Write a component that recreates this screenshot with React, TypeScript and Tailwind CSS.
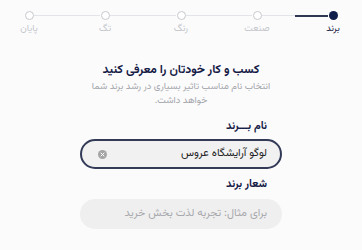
import { useState } from "react";

const steps = ["برند", "صنعت", "رنگ", "تگ", "پایان"];

function Stepper() {
  return (
    <div dir="rtl" className="flex items-start pt-[11px] pr-[29px] pl-[29px] justify-between">
      {steps.map((s, i) => (
        <div key={s} className="contents">
          <div className="flex w-0 flex-col items-center">
            {i === 0 ? (
              <span className="block h-[9px] w-[9px] shrink-0 rounded-full bg-[#0f1d4a]" />
            ) : (
              <span className="block h-[9px] w-[9px] shrink-0 rounded-full border border-[#c7c9ce] bg-white" />
            )}
            <span
              className={`mt-[3px] whitespace-nowrap text-[9.5px] leading-[12px] ${
                i === 0 ? "text-[#1c2340]" : "text-[#c4c6cb]"
              }`}
            >
              {s}
            </span>
          </div>
          {i < steps.length - 1 && (
            <div className="mt-[4px] flex h-px flex-1 items-center px-[5px]">
              {i === 0 ? (
                <>
                  <div className="h-[2px] flex-1 bg-[#2f3855]" />
                  <div className="h-px flex-1 bg-[#e3e4e8]" />
                </>
              ) : (
                <div className="h-px flex-1 bg-[#e3e4e8]" />
              )}
            </div>
          )}
        </div>
      ))}
    </div>
  );
}

export default function App() {
  const [name, setName] = useState("لوگو آرایشگاه عروس");
  const [slogan, setSlogan] = useState("");

  return (
    <div
      dir="rtl"
      className="h-[250px] w-[362px] overflow-hidden bg-[#fbfbfc]"
      style={{ fontFamily: '"Vazirmatn", "Noto Sans Arabic", "DejaVu Sans", sans-serif' }}
    >
      <Stepper />

      <div className="mx-auto mt-[26px] w-[202px]">
        <h1 className="text-center text-[12px] font-bold leading-[19px] text-[#151a45]">
          کسب و کار خودتان را معرفی کنید
        </h1>
        <p className="mx-auto w-[180px] text-center text-[9.5px] leading-[14px] text-[#a3a5aa]">
          انتخاب نام مناسب تاثیر بسیاری در رشد برند شما خواهد داشت.
        </p>

        <label className="mt-[12px] block pr-[15px] text-[11px] font-bold leading-[14px] text-[#151a45]">
          نام بـــرند
        </label>
        <div className="mt-[5px] flex h-[30px] items-center rounded-full border-2 border-[#323a57] bg-[#f1f1f1] pl-[16px] pr-[13px]">
          <input
            value={name}
            onChange={(e) => setName(e.target.value)}
            className="min-w-0 flex-1 bg-transparent text-[11px] text-[#222] outline-none"
          />
          <button
            type="button"
            onClick={() => setName("")}
            className="flex h-[9px] w-[9px] shrink-0 items-center justify-center rounded-full bg-[#a5a5a5]"
          >
            <svg viewBox="0 0 10 10" className="h-[5px] w-[5px]" stroke="white" strokeWidth={2} strokeLinecap="round">
              <path d="M2 2l6 6M8 2l-6 6" />
            </svg>
          </button>
        </div>

        <label className="mt-[9px] block pr-[15px] text-[11px] font-bold leading-[14px] text-[#151a45]">
          شعار برند
        </label>
        <div className="mt-[7px] flex h-[30px] items-center rounded-full bg-[#efefef] px-[15px]">
          <input
            value={slogan}
            onChange={(e) => setSlogan(e.target.value)}
            placeholder="برای مثال: تجربه لذت بخش خرید"
            className="min-w-0 flex-1 bg-transparent text-[11px] text-[#222] outline-none placeholder:text-[#a8a9ad]"
          />
        </div>
      </div>
    </div>
  );
}
